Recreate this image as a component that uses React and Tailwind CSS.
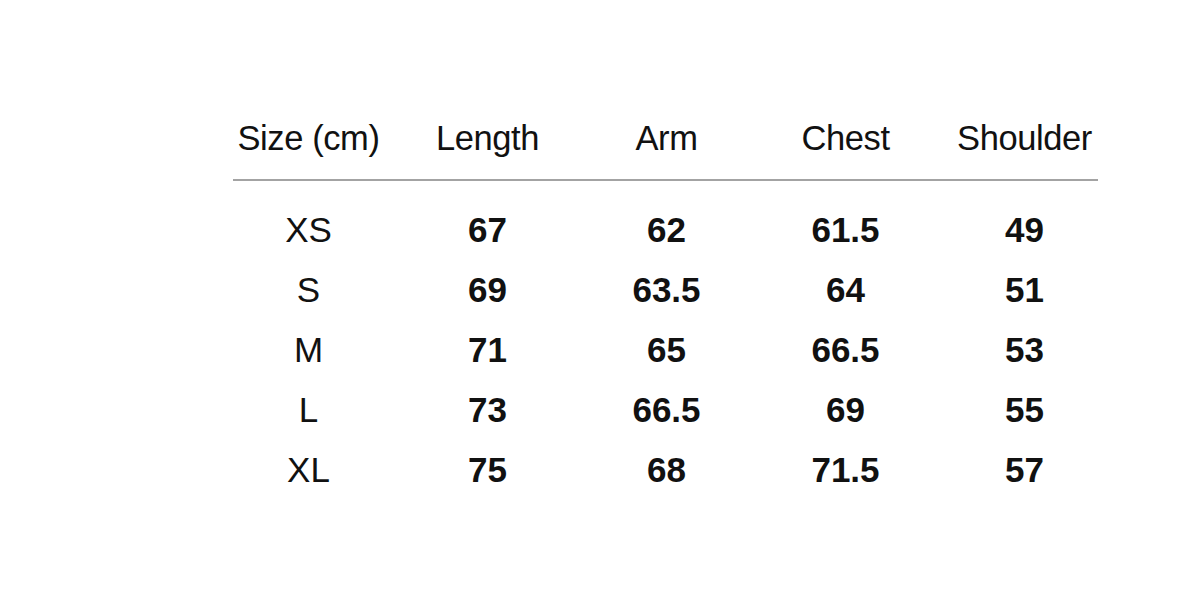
import React from 'react';

const headers = ['Size (cm)', 'Length', 'Arm', 'Chest', 'Shoulder'];

const rows = [
  ['XS', '67', '62', '61.5', '49'],
  ['S', '69', '63.5', '64', '51'],
  ['M', '71', '65', '66.5', '53'],
  ['L', '73', '66.5', '69', '55'],
  ['XL', '75', '68', '71.5', '57'],
];

export default function App() {
  return (
    <div
      className="w-[1195px] h-[615px] bg-white text-[#111] pt-[118px] pl-[219px]"
      style={{ fontFamily: '"Liberation Sans", Arial, sans-serif' }}
    >
      {/* Header */}
      <div className="grid grid-cols-[repeat(5,179px)] text-[34.5px] leading-[40px] tracking-[-0.4px]">
        {headers.map((h) => (
          <div key={h} className="text-center">
            {h}
          </div>
        ))}
      </div>

      <div className="ml-[14px] mt-[21px] w-[865px] h-[2px] bg-[#a3a3a3]" />

      {/* Rows */}
      <div className="mt-[19px]">
        {rows.map((r) => (
          <div
            key={r[0]}
            className="grid grid-cols-[repeat(5,179px)] h-[60px] items-center text-[35px] leading-[40px]"
          >
            {r.map((v, i) => (
              <div
                key={i}
                className={`text-center ${i === 0 ? 'font-normal' : 'font-bold'}`}
              >
                {v}
              </div>
            ))}
          </div>
        ))}
      </div>
    </div>
  );
}
